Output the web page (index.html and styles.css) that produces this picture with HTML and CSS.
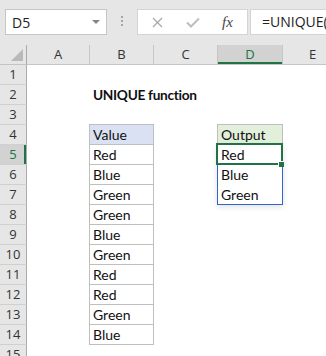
FILE: index.html
```html
<!DOCTYPE html>
<html lang="en">
<head>
    <meta charset="UTF-8">
    <title>UNIQUE function</title>
    <link rel="stylesheet" href="styles.css">
</head>
<body>
    <div class="toolbar">
        <div class="namebox"><span>D5</span><span class="caret"></span></div>
        <div class="grip"><i></i><i></i><i></i></div>
        <div class="fbtns">
            <span class="fbtn">
                <svg width="11" height="11" viewBox="0 0 11 11"><path d="M1 1 L10 10 M10 1 L1 10" stroke="#a9a9a9" stroke-width="1.3" fill="none"/></svg>
            </span>
            <span class="fbtn">
                <svg width="14" height="11" viewBox="0 0 14 11"><path d="M1 5.5 L5 9.5 L13 1.5" stroke="#bdbdbd" stroke-width="2" fill="none"/></svg>
            </span>
            <span class="fbtn fx">fx</span>
        </div>
        <div class="finput">=UNIQUE(B5:B14)</div>
    </div>

    <div class="sheet">
        <!-- column headers -->
        <div class="corner"><span class="tri"></span></div>
        <div class="ch">A</div>
        <div class="ch">B</div>
        <div class="ch">C</div>
        <div class="ch on">D</div>
        <div class="ch">E</div>

        <div class="rh">1</div><div class="c"></div><div class="c"></div><div class="c"></div><div class="c"></div><div class="c"></div>
        <div class="rh">2</div><div class="c"></div><div class="c title">UNIQUE function</div><div class="c"></div><div class="c"></div><div class="c"></div>
        <div class="rh">3</div><div class="c"></div><div class="c"></div><div class="c"></div><div class="c"></div><div class="c"></div>
        <div class="rh">4</div><div class="c"></div><div class="c t top blue">Value</div><div class="c"></div><div class="c t top green">Output</div><div class="c"></div>
        <div class="rh on">5</div><div class="c"></div><div class="c t">Red</div><div class="c"></div>
        <div class="c sp">Red
            <span class="spill"></span>
            <span class="sel"></span>
            <span class="handle"></span>
        </div><div class="c"></div>
        <div class="rh">6</div><div class="c"></div><div class="c t">Blue</div><div class="c"></div><div class="c sp">Blue</div><div class="c"></div>
        <div class="rh">7</div><div class="c"></div><div class="c t">Green</div><div class="c"></div><div class="c sp">Green</div><div class="c"></div>
        <div class="rh">8</div><div class="c"></div><div class="c t">Green</div><div class="c"></div><div class="c"></div><div class="c"></div>
        <div class="rh">9</div><div class="c"></div><div class="c t">Blue</div><div class="c"></div><div class="c"></div><div class="c"></div>
        <div class="rh">10</div><div class="c"></div><div class="c t">Green</div><div class="c"></div><div class="c"></div><div class="c"></div>
        <div class="rh">11</div><div class="c"></div><div class="c t">Red</div><div class="c"></div><div class="c"></div><div class="c"></div>
        <div class="rh">12</div><div class="c"></div><div class="c t">Red</div><div class="c"></div><div class="c"></div><div class="c"></div>
        <div class="rh">13</div><div class="c"></div><div class="c t">Green</div><div class="c"></div><div class="c"></div><div class="c"></div>
        <div class="rh">14</div><div class="c"></div><div class="c t">Blue</div><div class="c"></div><div class="c"></div><div class="c"></div>
        <div class="rh">15</div><div class="c"></div><div class="c"></div><div class="c"></div><div class="c"></div><div class="c"></div>
    </div>
</body>
</html>
```

FILE: styles.css
```css
body {
    margin: 0;
    width: 326px;
    height: 356px;
    overflow: hidden;
    background: #fff;
    font-family: "Open Sans", sans-serif;
}

/* formula bar */
.toolbar {
    height: 45px;
    box-sizing: border-box;
    padding: 9px 0 0 5px;
    background: #e6e6e6;
    display: flex;
    align-items: flex-start;
}

.toolbar > * {
    flex: none;
}

.namebox {
    width: 102px;
    height: 26px;
    box-sizing: border-box;
    background: #fff;
    border: 1px solid #c6c6c6;
    display: flex;
    align-items: center;
    justify-content: space-between;
    padding: 0 6px 0 6px;
    font-size: 14px;
    color: #222;
}

.caret {
    border-left: 4px solid transparent;
    border-right: 4px solid transparent;
    border-top: 4px solid #858585;
}

.grip {
    width: 30px;
    display: flex;
    flex-direction: column;
    align-items: center;
    gap: 2px;
    padding-top: 7px;
}

.grip i {
    width: 2px;
    height: 2px;
    background: #a6a6a6;
}

.fbtns {
    width: 111px;
    height: 26px;
    box-sizing: border-box;
    background: #fff;
    border: 1px solid #d4d4d4;
    display: flex;
    padding-left: 2px;
}

.fbtn {
    width: 35px;
    display: flex;
    align-items: center;
    justify-content: center;
}

.fx {
    font-family: "Liberation Serif", serif;
    font-style: italic;
    font-size: 15px;
    color: #444;
}

.finput {
    width: 120px;
    height: 26px;
    box-sizing: border-box;
    margin-left: 2px;
    background: #fff;
    border: 1px solid #d4d4d4;
    padding-left: 11px;
    font-size: 14px;
    line-height: 24px;
    color: #222;
    white-space: nowrap;
    overflow: hidden;
}

/* grid */
.sheet {
    display: grid;
    grid-template-columns: 27px 63px 64px 64px 65px 60px;
    grid-template-rows: repeat(16, 20px);
}

.corner,
.ch,
.rh {
    box-sizing: border-box;
    background: #e6e6e6;
    color: #333;
    font-size: 13px;
    line-height: 19px;
    text-align: center;
}

.corner {
    border-right: 1px solid #ababab;
    border-bottom: 1px solid #c4c4c4;
    display: flex;
    justify-content: flex-end;
    align-items: flex-end;
    padding: 0 3px 3px 0;
}

.tri {
    border-left: 12px solid transparent;
    border-bottom: 12px solid #b9b9b9;
}

.ch {
    border-right: 1px solid #c6c6c6;
    border-bottom: 1px solid #c4c4c4;
}

.rh {
    border-right: 1px solid #ababab;
    border-bottom: 1px solid #d0d0d0;
}

.ch.on {
    background: #d2d2d2;
    color: #217346;
    box-shadow: inset 0 -2px #217346;
}

.rh.on {
    background: #d2d2d2;
    color: #217346;
    box-shadow: inset -2px 0 #217346;
}

.c {
    font-family: Lato, sans-serif;
    font-size: 14px;
    line-height: 19px;
    color: #111;
    white-space: nowrap;
    padding-left: 3px;
}

.title {
    font-weight: bold;
    font-size: 13.7px;
    letter-spacing: -0.3px;
}

.t {
    margin-left: -1px;
    border: 1px solid #bfbfbf;
    border-top: none;
}

.t.top {
    margin-top: -1px;
    border-top: 1px solid #bfbfbf;
}

.blue {
    background: #d9e1f2;
}

.green {
    background: #e2efda;
}

.sp {
    position: relative;
}

.spill {
    position: absolute;
    left: -1px;
    top: -1px;
    width: 66px;
    height: 61px;
    box-sizing: border-box;
    border: 1px solid #2f66c9;
    box-shadow: 0 2px 6px rgba(0, 0, 0, 0.12);
}

.sel {
    position: absolute;
    left: -2px;
    top: -2px;
    width: 67px;
    height: 22px;
    box-sizing: border-box;
    border: 2px solid #217346;
}

.handle {
    position: absolute;
    left: 60px;
    top: 16px;
    width: 6px;
    height: 6px;
    box-sizing: border-box;
    background: #217346;
    border-left: 1px solid #fff;
    border-top: 1px solid #fff;
}
```
